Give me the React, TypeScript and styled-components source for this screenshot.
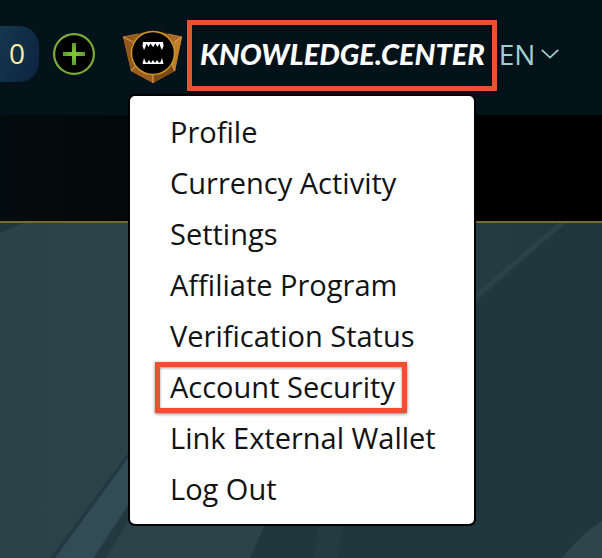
import React from 'react';
import styled, { createGlobalStyle, css } from 'styled-components';

const GlobalStyle = createGlobalStyle`
  *, *::before, *::after { box-sizing: border-box; }
  html, body { margin: 0; }
  body {
    background: #20383d;
    font-family: "Open Sans", "Noto Sans", sans-serif;
    overflow-x: hidden;
  }
`;

const marked = css`
  border-color: #eb512f;
  box-shadow: 0 1px 3px rgba(0, 0, 0, 0.5), inset 0 1px 3px rgba(0, 0, 0, 0.4);
`;

const Page = styled.div`
  min-height: 100vh;
  display: flex;
  flex-direction: column;
`;

const Header = styled.header`
  position: relative;
  z-index: 1;
  display: flex;
  align-items: center;
  padding: 20px 0 24px;
  background: #04121a;
`;

const Balance = styled.div`
  display: flex;
  align-items: center;
  justify-content: flex-end;
  width: 39px;
  height: 56px;
  margin-bottom: 3px;
  padding: 0 14px 2px 0;
  border-radius: 0 20px 20px 0;
  background: linear-gradient(110deg, #14374b, #0c2342);
  color: #fbeaa6;
  font-size: 28px;
`;

const AddButton = styled.button`
  display: flex;
  margin: 0 28px 3px 14px;
  padding: 0;
  border: 0;
  background: none;
  cursor: pointer;
`;

const Account = styled.div`
  position: relative;
  display: flex;
  align-items: center;
  gap: 3px;
`;

const AvatarIcon = styled.svg`
  margin-top: 3px;
`;

const NameButton = styled.button`
  height: 71px;
  padding: 0 7px 4px 8px;
  border: 5px solid transparent;
  background: none;
  color: #fff;
  font: italic 900 29px/1 Lato, sans-serif;
  text-transform: uppercase;
  white-space: nowrap;
  cursor: pointer;
  ${marked}
`;

const LanguageButton = styled.button`
  display: flex;
  align-items: center;
  gap: 6px;
  margin-bottom: 3px;
  padding: 0 0 0 2px;
  border: 0;
  background: none;
  color: #a0d0d0;
  font: 28px/1 "Open Sans", sans-serif;
  cursor: pointer;
`;

const Menu = styled.ul`
  position: absolute;
  top: 74px;
  left: 5px;
  width: 348px;
  margin: 0;
  padding: 11px 25px 9px;
  border: 2px solid #000;
  border-radius: 7px;
  background: #fff;
  list-style: none;
`;

const MenuItem = styled.li`
  display: flex;
`;

const MenuLink = styled.a<{ $marked?: boolean }>`
  height: 51px;
  padding: 0 7px 0 10px;
  border: 5px solid transparent;
  color: #111315;
  font-size: 29px;
  line-height: 39px;
  text-decoration: none;
  white-space: nowrap;
  ${({ $marked }) => $marked && marked}
`;

const NavBand = styled.nav`
  height: 108px;
  border-bottom: 2px solid #79682f;
  background: linear-gradient(90deg, #030c0e, #000 75%);
`;

const Content = styled.main`
  flex: 1;
  display: flex;
  min-height: 335px;
  background: #20383d;
`;

const Backdrop = styled.svg`
  flex: 1;
  width: 100%;
`;

const links = [
  'Profile',
  'Currency Activity',
  'Settings',
  'Affiliate Program',
  'Verification Status',
  'Account Security',
  'Link External Wallet',
  'Log Out',
];

function PlusIcon() {
  return (
    <svg width="42" height="42" viewBox="0 0 42 42" aria-hidden="true">
      <defs>
        <radialGradient id="plusFill">
          <stop offset="0" stopColor="#83cf37" />
          <stop offset="1" stopColor="#5d9930" />
        </radialGradient>
      </defs>
      <circle cx="21" cy="21" r="19.9" fill="#000" stroke="#7aac3a" strokeWidth="2.2" />
      <path d="M19 10h4v9h9v4h-9v9h-4v-9h-9v-4h9z" fill="url(#plusFill)" />
    </svg>
  );
}

function Avatar() {
  return (
    <AvatarIcon width="61" height="54" viewBox="0 1 61 54" role="img" aria-label="Avatar">
      <defs>
        <linearGradient id="bronze" x1="0" x2="1" y1="0" y2="1">
          <stop offset="0" stopColor="#8a5017" />
          <stop offset=".5" stopColor="#ad6b20" />
          <stop offset="1" stopColor="#8a5017" />
        </linearGradient>
      </defs>
      <path d="M0 8 15 5Q30-1 45 5l14 3-7 34-22 12L8 42z" fill="url(#bronze)" />
      <path d="M45 5l14 3-8 5z" fill="#a86a24" />
      <path d="M51 13l8-5-7 34-4-8z" fill="#c17f28" />
      <path d="M0 8l10 5 5 21-7 8z" fill="#94581d" />
      <path d="M8 42l7-7 15 11v8z" fill="#9d5d20" />
      <path d="M30 46l18-12 4 8-22 12z" fill="#7c4816" />
      <path d="M10 13l5 21 15 12 18-12 3-21" fill="none" stroke="#b97832" strokeWidth=".6" />
      <path d="M0 8l10 5M51 13l8-5M8 42l7-8M48 34l4 8M30 46v8" fill="none" stroke="#e6ad66" strokeWidth=".9" />
      <path d="M0 8 15 5M45 5l14 3" fill="none" stroke="#c4843c" strokeWidth=".8" />
      <circle cx="30" cy="24" r="21.5" fill="#000" stroke="#c9992b" strokeWidth="1.4" />
      <path d="M20 13H40L40.500 17 39 21 37.500 18 36.500 14.500 34.500 18 32.500 14.500 30 18 27.500 14.500 25.500 18 23.500 14.500 22.500 18 21 21 19.500 17z" fill="#fff" />
      <path d="M21 29 22.500 33 24 34 26 31 28 34 30 31 32 34 34 31 36 34 37.500 33 39 29 40.500 35H19.500z" fill="#fff" />
    </AvatarIcon>
  );
}

function Chevron() {
  return (
    <svg width="18" height="10" viewBox="0 0 18 10" aria-hidden="true">
      <path d="M.8 .8 9 8.500 17.200 .8" fill="none" stroke="currentColor" strokeWidth="1.7" />
    </svg>
  );
}

export default function App() {
  return (
    <Page>
      <GlobalStyle />
      <Header>
        <Balance>0</Balance>
        <AddButton aria-label="Add funds">
          <PlusIcon />
        </AddButton>
        <Account>
          <Avatar />
          <NameButton aria-expanded="true" aria-haspopup="true">Knowledge.Center</NameButton>
          <Menu>
            {links.map((label) => (
              <MenuItem key={label}>
                <MenuLink href="#" $marked={label === 'Account Security'}>{label}</MenuLink>
              </MenuItem>
            ))}
          </Menu>
        </Account>
        <LanguageButton aria-label="Language: EN">
          EN
          <Chevron />
        </LanguageButton>
      </Header>
      <NavBand />
      <Content>
        <Backdrop viewBox="0 0 602 335" preserveAspectRatio="none" aria-hidden="true">
          <defs>
            <linearGradient id="glow" x1="0" x2="1" y1="0" y2="0">
              <stop offset="0" stopColor="#2a4349" />
              <stop offset=".45" stopColor="#2b444a" />
              <stop offset="1" stopColor="#213a3f" />
            </linearGradient>
          </defs>
          <path d="M24 0H566L476 80 264 304 250 335H0V10Z" fill="url(#glow)" />
          <path d="M566 0 476 76V70L558 0z" fill="#2a4349" />
          <path d="M128 235V281L93 335H55z" fill="#314c52" />
          <path d="M128 230V235L55 335H50zM128 283V298L106 335H94z" fill="#22393f" />
          <path d="M318 304 315 335H338L342 304z" fill="#233c42" />
          <path d="M602 298Q580 312 562 335H602z" fill="#2c464c" />
        </Backdrop>
      </Content>
    </Page>
  );
}
